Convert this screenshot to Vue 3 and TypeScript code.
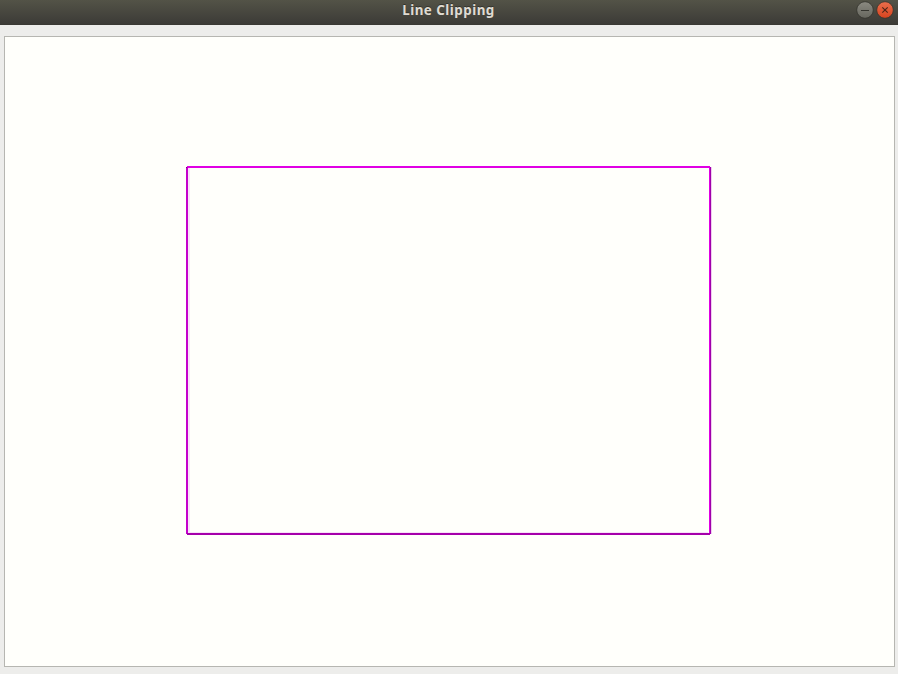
<script setup lang="ts">
const title: string = 'Line Clipping'
</script>

<template>
  <main class="window">
    <header class="titlebar">
      <h1>{{ title }}</h1>
      <div class="controls">
        <svg width="18" height="18" viewBox="0 0 18 18" role="img" aria-label="Minimize">
          <defs>
            <linearGradient id="grey" x1="0" y1="0" x2="0" y2="1">
              <stop offset="0" stop-color="#8b8a81" />
              <stop offset="1" stop-color="#66665e" />
            </linearGradient>
          </defs>
          <circle cx="9" cy="9" r="8.3" fill="url(#grey)" stroke="#34342d" stroke-width="0.8" />
          <path d="M5 9.5h8" stroke="#35352f" />
        </svg>
        <svg width="18" height="18" viewBox="0 0 18 18" role="img" aria-label="Close">
          <defs>
            <linearGradient id="red" x1="0" y1="0" x2="0" y2="1">
              <stop offset="0" stop-color="#ea6f4d" />
              <stop offset="1" stop-color="#d6431e" />
            </linearGradient>
          </defs>
          <circle cx="9" cy="9" r="8.3" fill="url(#red)" stroke="#38332c" stroke-width="0.8" />
          <path d="M6.3 6.3l5.4 5.4M11.7 6.3l-5.4 5.4" stroke="#4b2518" stroke-width="1.1" />
        </svg>
      </div>
    </header>
    <section class="content">
      <svg class="canvas" width="889" height="629" viewBox="0 0 889 629" shape-rendering="crispEdges">
        <path d="M183 495h520v1h-520zM183 131h2v364h-2z" fill="#f8e2f8" />
        <path d="M706 130h1v367h-1z" fill="#efccf0" />
        <path d="M182 129h523v2h-523z" fill="#e000e4" />
        <path d="M181 130h2v367h-2z" fill="#c400cc" />
        <path d="M704 130h1v367h-1z" fill="#e000e4" />
        <path d="M705 130h1v367h-1z" fill="#a000aa" />
        <path d="M182 496h523v2h-523z" fill="#a500aa" />
        <path d="M181 130h1v1h-1z" fill="#780080" />
      </svg>
    </section>
  </main>
</template>

<style>
body {
  margin: 0;
}
</style>

<style scoped>
.window {
  display: flex;
  flex-direction: column;
  width: 898px;
  height: 674px;
  background: #ededeb;
}

.titlebar {
  display: grid;
  grid-template-columns: 41px 1fr 42px;
  box-sizing: border-box;
  height: 25px;
  background: linear-gradient(#535347, #3c3b37);
  border-bottom: 1px solid #3a3934;
}

h1 {
  grid-column: 2;
  margin: 0;
  color: #dfdbd2;
  font: 700 13.4px/20px "Noto Sans", "Open Sans", sans-serif;
  letter-spacing: 0.48px;
  text-align: center;
  text-shadow: 0 -1px #34342e;
}

.controls {
  display: flex;
  gap: 2px;
  padding-top: 1px;
}

.content {
  flex: 1;
  padding: 11px 3px 7px 4px;
}

.canvas {
  display: block;
  border: 1px solid #b6b6b1;
  background: #fffffb;
}
</style>
